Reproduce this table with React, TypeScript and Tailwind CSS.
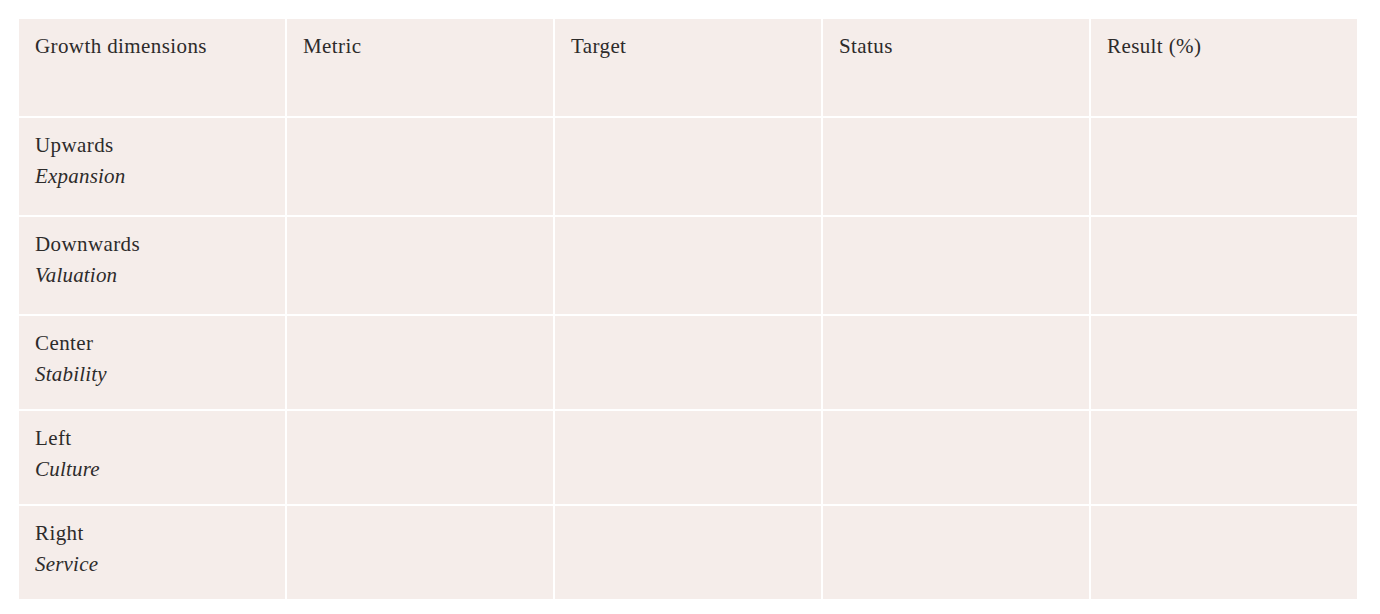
const columns = ['Growth dimensions', 'Metric', 'Target', 'Status', 'Result (%)'];

const rows = [
  { name: 'Upwards', label: 'Expansion', h: 'h-[97px]' },
  { name: 'Downwards', label: 'Valuation', h: 'h-[97px]' },
  { name: 'Center', label: 'Stability', h: 'h-[93px]' },
  { name: 'Left', label: 'Culture', h: 'h-[93px]' },
  { name: 'Right', label: 'Service', h: 'h-[93px]' },
];

export default function App() {
  return (
    <div
      className="min-h-screen bg-white pl-[19px] pt-[19px] text-[21px] leading-[31px] tracking-[0.4px] text-[#2d2b2a]"
      style={{ fontFamily: '"Liberation Serif", "Times New Roman", serif' }}
    >
      <div className="grid w-[1338px] grid-cols-[repeat(5,266px)] gap-[2px]">
        {columns.map((col) => (
          <div key={col} className="h-[97px] bg-[#f5edea] px-4 pt-[12px]">
            {col}
          </div>
        ))}

        {rows.map((row) => (
          <>
            <div key={row.name} className={`${row.h} bg-[#f5edea] px-4 pt-[12px]`}>
              <p>{row.name}</p>
              <p className="italic tracking-[0.2px]">{row.label}</p>
            </div>
            <div className={`${row.h} bg-[#f5edea]`}></div>
            <div className={`${row.h} bg-[#f5edea]`}></div>
            <div className={`${row.h} bg-[#f5edea]`}></div>
            <div className={`${row.h} bg-[#f5edea]`}></div>
          </>
        ))}
      </div>
    </div>
  );
}
